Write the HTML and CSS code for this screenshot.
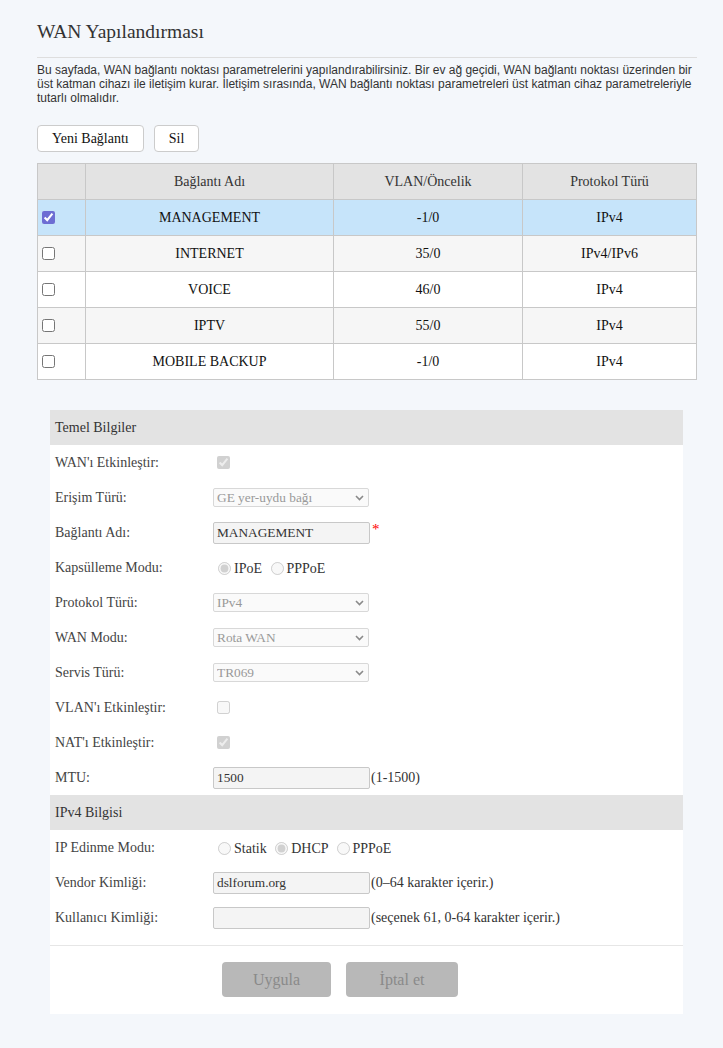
FILE: index.html
```html
<!DOCTYPE html>
<html lang="tr">
<head>
<meta charset="utf-8">
<title>WAN Yapılandırması</title>
<link rel="stylesheet" href="styles.css">
</head>
<body>
<div class="page">
  <h1 class="title">WAN Yapılandırması</h1>
  <p class="desc">Bu sayfada, WAN bağlantı noktası parametrelerini yapılandırabilirsiniz. Bir ev ağ geçidi, WAN bağlantı noktası üzerinden bir üst katman cihazı ile iletişim kurar. İletişim sırasında, WAN bağlantı noktası parametreleri üst katman cihaz parametreleriyle tutarlı olmalıdır.</p>
  <div class="toolbar">
    <button class="tbtn" type="button">Yeni Bağlantı</button>
    <button class="tbtn" type="button">Sil</button>
  </div>
  <table class="wan-table">
    <colgroup>
      <col class="w-check"><col class="w-name"><col class="w-vlan"><col class="w-proto">
    </colgroup>
    <thead>
      <tr><th></th><th>Bağlantı Adı</th><th>VLAN/Öncelik</th><th>Protokol Türü</th></tr>
    </thead>
    <tbody>
      <tr class="sel-row"><td class="c-check"><input type="checkbox" checked></td><td>MANAGEMENT</td><td>-1/0</td><td>IPv4</td></tr>
      <tr class="alt"><td class="c-check"><input type="checkbox"></td><td>INTERNET</td><td>35/0</td><td>IPv4/IPv6</td></tr>
      <tr><td class="c-check"><input type="checkbox"></td><td>VOICE</td><td>46/0</td><td>IPv4</td></tr>
      <tr class="alt"><td class="c-check"><input type="checkbox"></td><td>IPTV</td><td>55/0</td><td>IPv4</td></tr>
      <tr><td class="c-check"><input type="checkbox"></td><td>MOBILE BACKUP</td><td>-1/0</td><td>IPv4</td></tr>
    </tbody>
  </table>

  <div class="panel">
    <div class="sec-head">Temel Bilgiler</div>
    <div class="row"><span class="lbl">WAN'ı Etkinleştir:</span><span class="ctl"><input type="checkbox" checked disabled></span></div>
    <div class="row"><span class="lbl">Erişim Türü:</span><span class="ctl"><span class="sel"><select disabled><option>GE yer-uydu bağı</option></select><svg class="chev" width="9" height="6" viewBox="0 0 9 6"><path d="M1 1l3.5 3.5L8 1" fill="none" stroke="#8a8a8a" stroke-width="1.6"/></svg></span></span></div>
    <div class="row"><span class="lbl">Bağlantı Adı:</span><span class="ctl"><input class="txt" type="text" value="MANAGEMENT"><span class="req">*</span></span></div>
    <div class="row"><span class="lbl">Kapsülleme Modu:</span><span class="ctl"><input type="radio" name="kap" checked disabled>IPoE <input type="radio" name="kap" disabled>PPPoE</span></div>
    <div class="row"><span class="lbl">Protokol Türü:</span><span class="ctl"><span class="sel"><select disabled><option>IPv4</option></select><svg class="chev" width="9" height="6" viewBox="0 0 9 6"><path d="M1 1l3.5 3.5L8 1" fill="none" stroke="#8a8a8a" stroke-width="1.6"/></svg></span></span></div>
    <div class="row"><span class="lbl">WAN Modu:</span><span class="ctl"><span class="sel"><select disabled><option>Rota WAN</option></select><svg class="chev" width="9" height="6" viewBox="0 0 9 6"><path d="M1 1l3.5 3.5L8 1" fill="none" stroke="#8a8a8a" stroke-width="1.6"/></svg></span></span></div>
    <div class="row"><span class="lbl">Servis Türü:</span><span class="ctl"><span class="sel"><select disabled><option>TR069</option></select><svg class="chev" width="9" height="6" viewBox="0 0 9 6"><path d="M1 1l3.5 3.5L8 1" fill="none" stroke="#8a8a8a" stroke-width="1.6"/></svg></span></span></div>
    <div class="row"><span class="lbl">VLAN'ı Etkinleştir:</span><span class="ctl"><input type="checkbox" disabled></span></div>
    <div class="row"><span class="lbl">NAT'ı Etkinleştir:</span><span class="ctl"><input type="checkbox" checked disabled></span></div>
    <div class="row"><span class="lbl">MTU:</span><span class="ctl"><input class="txt" type="text" value="1500"><span class="hint">(1-1500)</span></span></div>

    <div class="sec-head">IPv4 Bilgisi</div>
    <div class="row"><span class="lbl">IP Edinme Modu:</span><span class="ctl"><input type="radio" name="ip" disabled>Statik <input type="radio" name="ip" checked disabled>DHCP <input type="radio" name="ip" disabled>PPPoE</span></div>
    <div class="row"><span class="lbl">Vendor Kimliği:</span><span class="ctl"><input class="txt" type="text" value="dslforum.org"><span class="hint">(0–64 karakter içerir.)</span></span></div>
    <div class="row"><span class="lbl">Kullanıcı Kimliği:</span><span class="ctl"><input class="txt" type="text" value=""><span class="hint">(seçenek 61, 0-64 karakter içerir.)</span></span></div>

    <div class="foot">
      <button class="abtn apply" type="button" disabled>Uygula</button>
      <button class="abtn cancel" type="button" disabled>İptal et</button>
    </div>
  </div>
</div>
</body>
</html>
```
FILE: styles.css
```css
html, body {
  margin: 0;
  background: #f4f7fb;
}
body {
  font-family: "Liberation Serif", "Times New Roman", serif;
  color: #333;
}
.page {
  padding: 20px 26px 33px 37px;
}
.title {
  margin: 0;
  font-size: 19.5px;
  font-weight: normal;
  line-height: 23px;
  padding-bottom: 14px;
  border-bottom: 1px solid #dedede;
  color: #333;
}
.desc {
  margin: 5px 0 0;
  font-family: "Liberation Sans", Arial, sans-serif;
  font-size: 12px;
  line-height: 14px;
  color: #333;
}
.toolbar {
  margin-top: 20px;
  display: flex;
  gap: 10px;
}
.tbtn {
  height: 27px;
  padding: 0 14px;
  border: 1px solid #ccc;
  border-radius: 4px;
  background: #fff;
  font-family: "Liberation Serif", serif;
  font-size: 14px;
  color: #111;
}
.wan-table {
  margin-top: 11px;
  width: 659px;
  border-collapse: collapse;
  table-layout: fixed;
  font-size: 14px;
}
.w-check { width: 48px; }
.w-name { width: 248px; }
.w-vlan { width: 189px; }
.w-proto { width: 174px; }
.wan-table th,
.wan-table td {
  border: 1px solid #c8c8c8;
  height: 35px;
  padding: 0;
  text-align: center;
  font-weight: normal;
  color: #111;
}
.wan-table th {
  background: #e3e3e3;
  color: #333;
}
.wan-table tbody tr { background: #fff; }
.wan-table tbody tr.alt { background: #f6f6f6; }
.wan-table tbody tr.sel-row { background: #c6e4fa; }
.wan-table td.c-check {
  text-align: left;
}
.wan-table input[type=checkbox] {
  margin: 3px 3px 3px 4px;
  vertical-align: middle;
  accent-color: #6d6dd3;
}
.panel {
  margin: 30px 14px 0 13px;
  background: #fff;
}
.sec-head {
  height: 35px;
  line-height: 35px;
  padding-left: 5px;
  background: #e3e3e3;
  font-size: 14px;
  color: #333;
}
.row {
  display: flex;
  align-items: center;
  height: 35px;
  padding-left: 5px;
  font-size: 14px;
}
.lbl {
  width: 158px;
  flex: none;
  color: #444;
}
.ctl {
  color: #333;
}
.ctl input[type=checkbox] {
  margin: 3px 3px 3px 4px;
  vertical-align: middle;
}
.ctl input[type=radio] {
  vertical-align: -2px;
}
.sel {
  position: relative;
  display: inline-block;
  width: 156px;
  height: 19px;
  vertical-align: middle;
}
.sel select {
  appearance: none;
  -webkit-appearance: none;
  box-sizing: border-box;
  width: 100%;
  height: 100%;
  margin: 0;
  padding: 0 3px;
  border: 1px solid #d8d8d8;
  border-radius: 2px;
  background: #fafafa;
  color: #999;
  font-family: "Liberation Serif", serif;
  font-size: 13.33px;
  opacity: 1;
}
.chev {
  position: absolute;
  right: 5px;
  top: 7px;
}
.txt {
  box-sizing: border-box;
  width: 157px;
  height: 22px;
  margin: 0;
  padding: 0 3px;
  border: 1px solid #c8c8c8;
  border-radius: 2px;
  background: #f4f4f4;
  font-family: "Liberation Serif", serif;
  font-size: 13.33px;
  color: #333;
  vertical-align: middle;
}
.req {
  color: #f00;
  font-size: 15px;
  vertical-align: 3px;
  margin-left: 2px;
}
.hint {
  vertical-align: middle;
  margin-left: 1px;
}
.foot {
  margin-top: 10px;
  border-top: 1px solid #e6e6e6;
  padding: 16px 0 17px 172px;
  display: flex;
  gap: 15px;
}
.abtn {
  height: 35px;
  border: none;
  border-radius: 4px;
  background: #b8b8b8;
  color: #8a8a8a;
  font-family: "Liberation Serif", serif;
  font-size: 16px;
}
.apply { width: 109px; }
.cancel { width: 112px; }
```
